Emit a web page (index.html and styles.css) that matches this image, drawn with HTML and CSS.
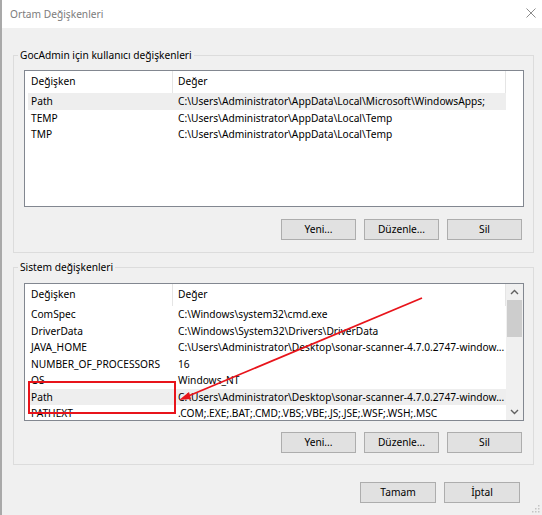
FILE: index.html
```html
<!DOCTYPE html>
<html lang="tr">
<head>
<meta charset="utf-8">
<title>Ortam Değişkenleri</title>
<link rel="stylesheet" href="styles.css">
</head>
<body>
<div class="window">
  <div class="titlebar">
    <span class="title">Ortam Değişkenleri</span>
    <svg class="close" width="12" height="12" viewBox="0 0 12 12"><path d="M1.5 1.5L10.5 10.5M10.5 1.5L1.5 10.5" stroke="#8c8c8c" stroke-width="1" fill="none"/></svg>
  </div>
  <div class="content">
    <fieldset class="group first">
      <legend>GocAdmin için kullanıcı değişkenleri</legend>
      <div class="list">
        <div class="list-main">
          <div class="row header"><span class="c1">Değişken</span><span class="c2">Değer</span></div>
          <div class="row selected"><span class="c1">Path</span><span class="c2">C:\Users\Administrator\AppData\Local\Microsoft\WindowsApps;</span></div>
          <div class="row"><span class="c1">TEMP</span><span class="c2">C:\Users\Administrator\AppData\Local\Temp</span></div>
          <div class="row"><span class="c1">TMP</span><span class="c2">C:\Users\Administrator\AppData\Local\Temp</span></div>
        </div>
        <div class="scroll-space"></div>
      </div>
      <div class="buttons">
        <button class="btn">Yeni...</button>
        <button class="btn">Düzenle...</button>
        <button class="btn">Sil</button>
      </div>
    </fieldset>
    <fieldset class="group second">
      <legend>Sistem değişkenleri</legend>
      <div class="list">
        <div class="list-main">
          <div class="row header"><span class="c1">Değişken</span><span class="c2">Değer</span></div>
          <div class="row"><span class="c1">ComSpec</span><span class="c2">C:\Windows\system32\cmd.exe</span></div>
          <div class="row"><span class="c1">DriverData</span><span class="c2">C:\Windows\System32\Drivers\DriverData</span></div>
          <div class="row"><span class="c1">JAVA_HOME</span><span class="c2">C:\Users\Administrator\Desktop\sonar-scanner-4.7.0.2747-window...</span></div>
          <div class="row"><span class="c1">NUMBER_OF_PROCESSORS</span><span class="c2">16</span></div>
          <div class="row"><span class="c1">OS</span><span class="c2">Windows_NT</span></div>
          <div class="row selected"><span class="c1">Path</span><span class="c2">C:\Users\Administrator\Desktop\sonar-scanner-4.7.0.2747-window...</span></div>
          <div class="row"><span class="c1">PATHEXT</span><span class="c2">.COM;.EXE;.BAT;.CMD;.VBS;.VBE;.JS;.JSE;.WSF;.WSH;.MSC</span></div>
        </div>
        <div class="scrollbar">
          <div class="arrow"><svg width="9" height="6" viewBox="0 0 9 6"><path d="M1 5L4.5 1.5L8 5" stroke="#606060" stroke-width="1.4" fill="none"/></svg></div>
          <div class="track"><div class="thumb"></div></div>
          <div class="arrow"><svg width="9" height="6" viewBox="0 0 9 6"><path d="M1 1L4.5 4.5L8 1" stroke="#606060" stroke-width="1.4" fill="none"/></svg></div>
        </div>
      </div>
      <div class="buttons">
        <button class="btn">Yeni...</button>
        <button class="btn">Düzenle...</button>
        <button class="btn">Sil</button>
      </div>
    </fieldset>
    <div class="dialog-buttons">
      <button class="btn wide">Tamam</button>
      <button class="btn wide">İptal</button>
    </div>
  </div>
  <svg class="grip" width="8" height="8" viewBox="0 0 8 8">
    <rect x="6" y="0" width="1.5" height="1.5" fill="#c4c4c4"/>
    <rect x="3" y="3" width="1.5" height="1.5" fill="#c4c4c4"/>
    <rect x="6" y="3" width="1.5" height="1.5" fill="#c4c4c4"/>
    <rect x="0" y="6" width="1.5" height="1.5" fill="#c4c4c4"/>
    <rect x="3" y="6" width="1.5" height="1.5" fill="#c4c4c4"/>
    <rect x="6" y="6" width="1.5" height="1.5" fill="#c4c4c4"/>
  </svg>
  <svg class="annotation" width="542" height="515" viewBox="0 0 542 515">
    <rect x="29" y="382" width="146" height="31" fill="none" stroke="#e8141b" stroke-width="2"/>
    <line x1="422" y1="298" x2="186" y2="397" stroke="#e8141b" stroke-width="1.8"/>
    <path d="M179 400L189 392L191 399Z" fill="#e8141b"/>
  </svg>
</div>
</body>
</html>
```
FILE: styles.css
```css
html, body {
  margin: 0;
  padding: 0;
}
body {
  width: 542px;
  height: 515px;
  overflow: hidden;
  font-family: "Noto Sans", "Open Sans", sans-serif;
  font-size: 10.2px;
  color: #000;
}
.window {
  position: relative;
  width: 542px;
  height: 515px;
  box-sizing: border-box;
  border-left: 2px solid #a9a9a9;
  background: #f0f0f0;
  display: flex;
  flex-direction: column;
}
.titlebar {
  height: 28px;
  flex: none;
  background: #fff;
  display: flex;
  align-items: center;
  justify-content: space-between;
  padding: 0 5px 0 8px;
}
.title {
  color: #7c7c7c;
}
.close {
  margin-top: -2px;
}
.content {
  padding: 19px 8px 0 11px;
  display: flex;
  flex-direction: column;
}
.group {
  margin: 0;
  border: 1px solid #dcdcdc;
  padding: 7px 9px 12px 10px;
  min-width: 0;
}
.group.second {
  margin-top: 6px;
  padding-top: 8px;
  padding-bottom: 11px;
}
.group legend {
  padding: 0 2px;
  margin-left: -6px;
  line-height: 16px;
  height: 16px;
}
.list {
  height: 137px;
  box-sizing: border-box;
  border: 1px solid #828790;
  background: #fff;
  display: flex;
  overflow: hidden;
}
.second .list {
  height: 138px;
}
.list-main {
  width: 478px;
  margin-left: 3px;
  flex: none;
}
.scroll-space {
  flex: 1;
}
.row {
  display: grid;
  grid-template-columns: 145px 1fr;
  height: 16.5px;
  line-height: 16.5px;
  white-space: nowrap;
}
.row .c1 {
  padding-left: 3px;
  overflow: hidden;
}
.row .c2 {
  padding-left: 5px;
  overflow: hidden;
}
.row.header {
  height: 22px;
  line-height: 21px;
}
.row.header .c1,
.row.header .c2 {
  border-right: 1px solid #e5e5e5;
}
.row.header .c1 {
  box-sizing: border-box;
}
.row.selected {
  background: #eeeeee;
}
.scrollbar {
  width: 17px;
  flex: none;
  margin-left: auto;
  background: #f0f0f0;
  display: flex;
  flex-direction: column;
}
.arrow {
  height: 16px;
  flex: none;
  display: flex;
  align-items: center;
  justify-content: center;
}
.track {
  flex: 1;
  padding: 0 1px;
}
.thumb {
  height: 37px;
  background: #cdcdcd;
}
.buttons {
  display: flex;
  justify-content: flex-end;
  gap: 8px;
  margin-top: 12px;
  padding-right: 2px;
}
.second .buttons {
  margin-top: 11px;
}
.btn {
  width: 75px;
  height: 21px;
  padding: 0;
  margin: 0;
  border: 1px solid #adadad;
  background: #e1e1e1;
  font-family: inherit;
  font-size: 10.2px;
  color: #000;
  line-height: 19px;
}
.btn.wide {
  width: 76px;
}
.dialog-buttons {
  display: flex;
  justify-content: flex-end;
  gap: 8px;
  margin-top: 17px;
  padding-right: 14px;
}
.grip {
  position: absolute;
  right: 2px;
  bottom: 2px;
}
.annotation {
  position: absolute;
  left: -2px;
  top: 0;
  pointer-events: none;
}
```
